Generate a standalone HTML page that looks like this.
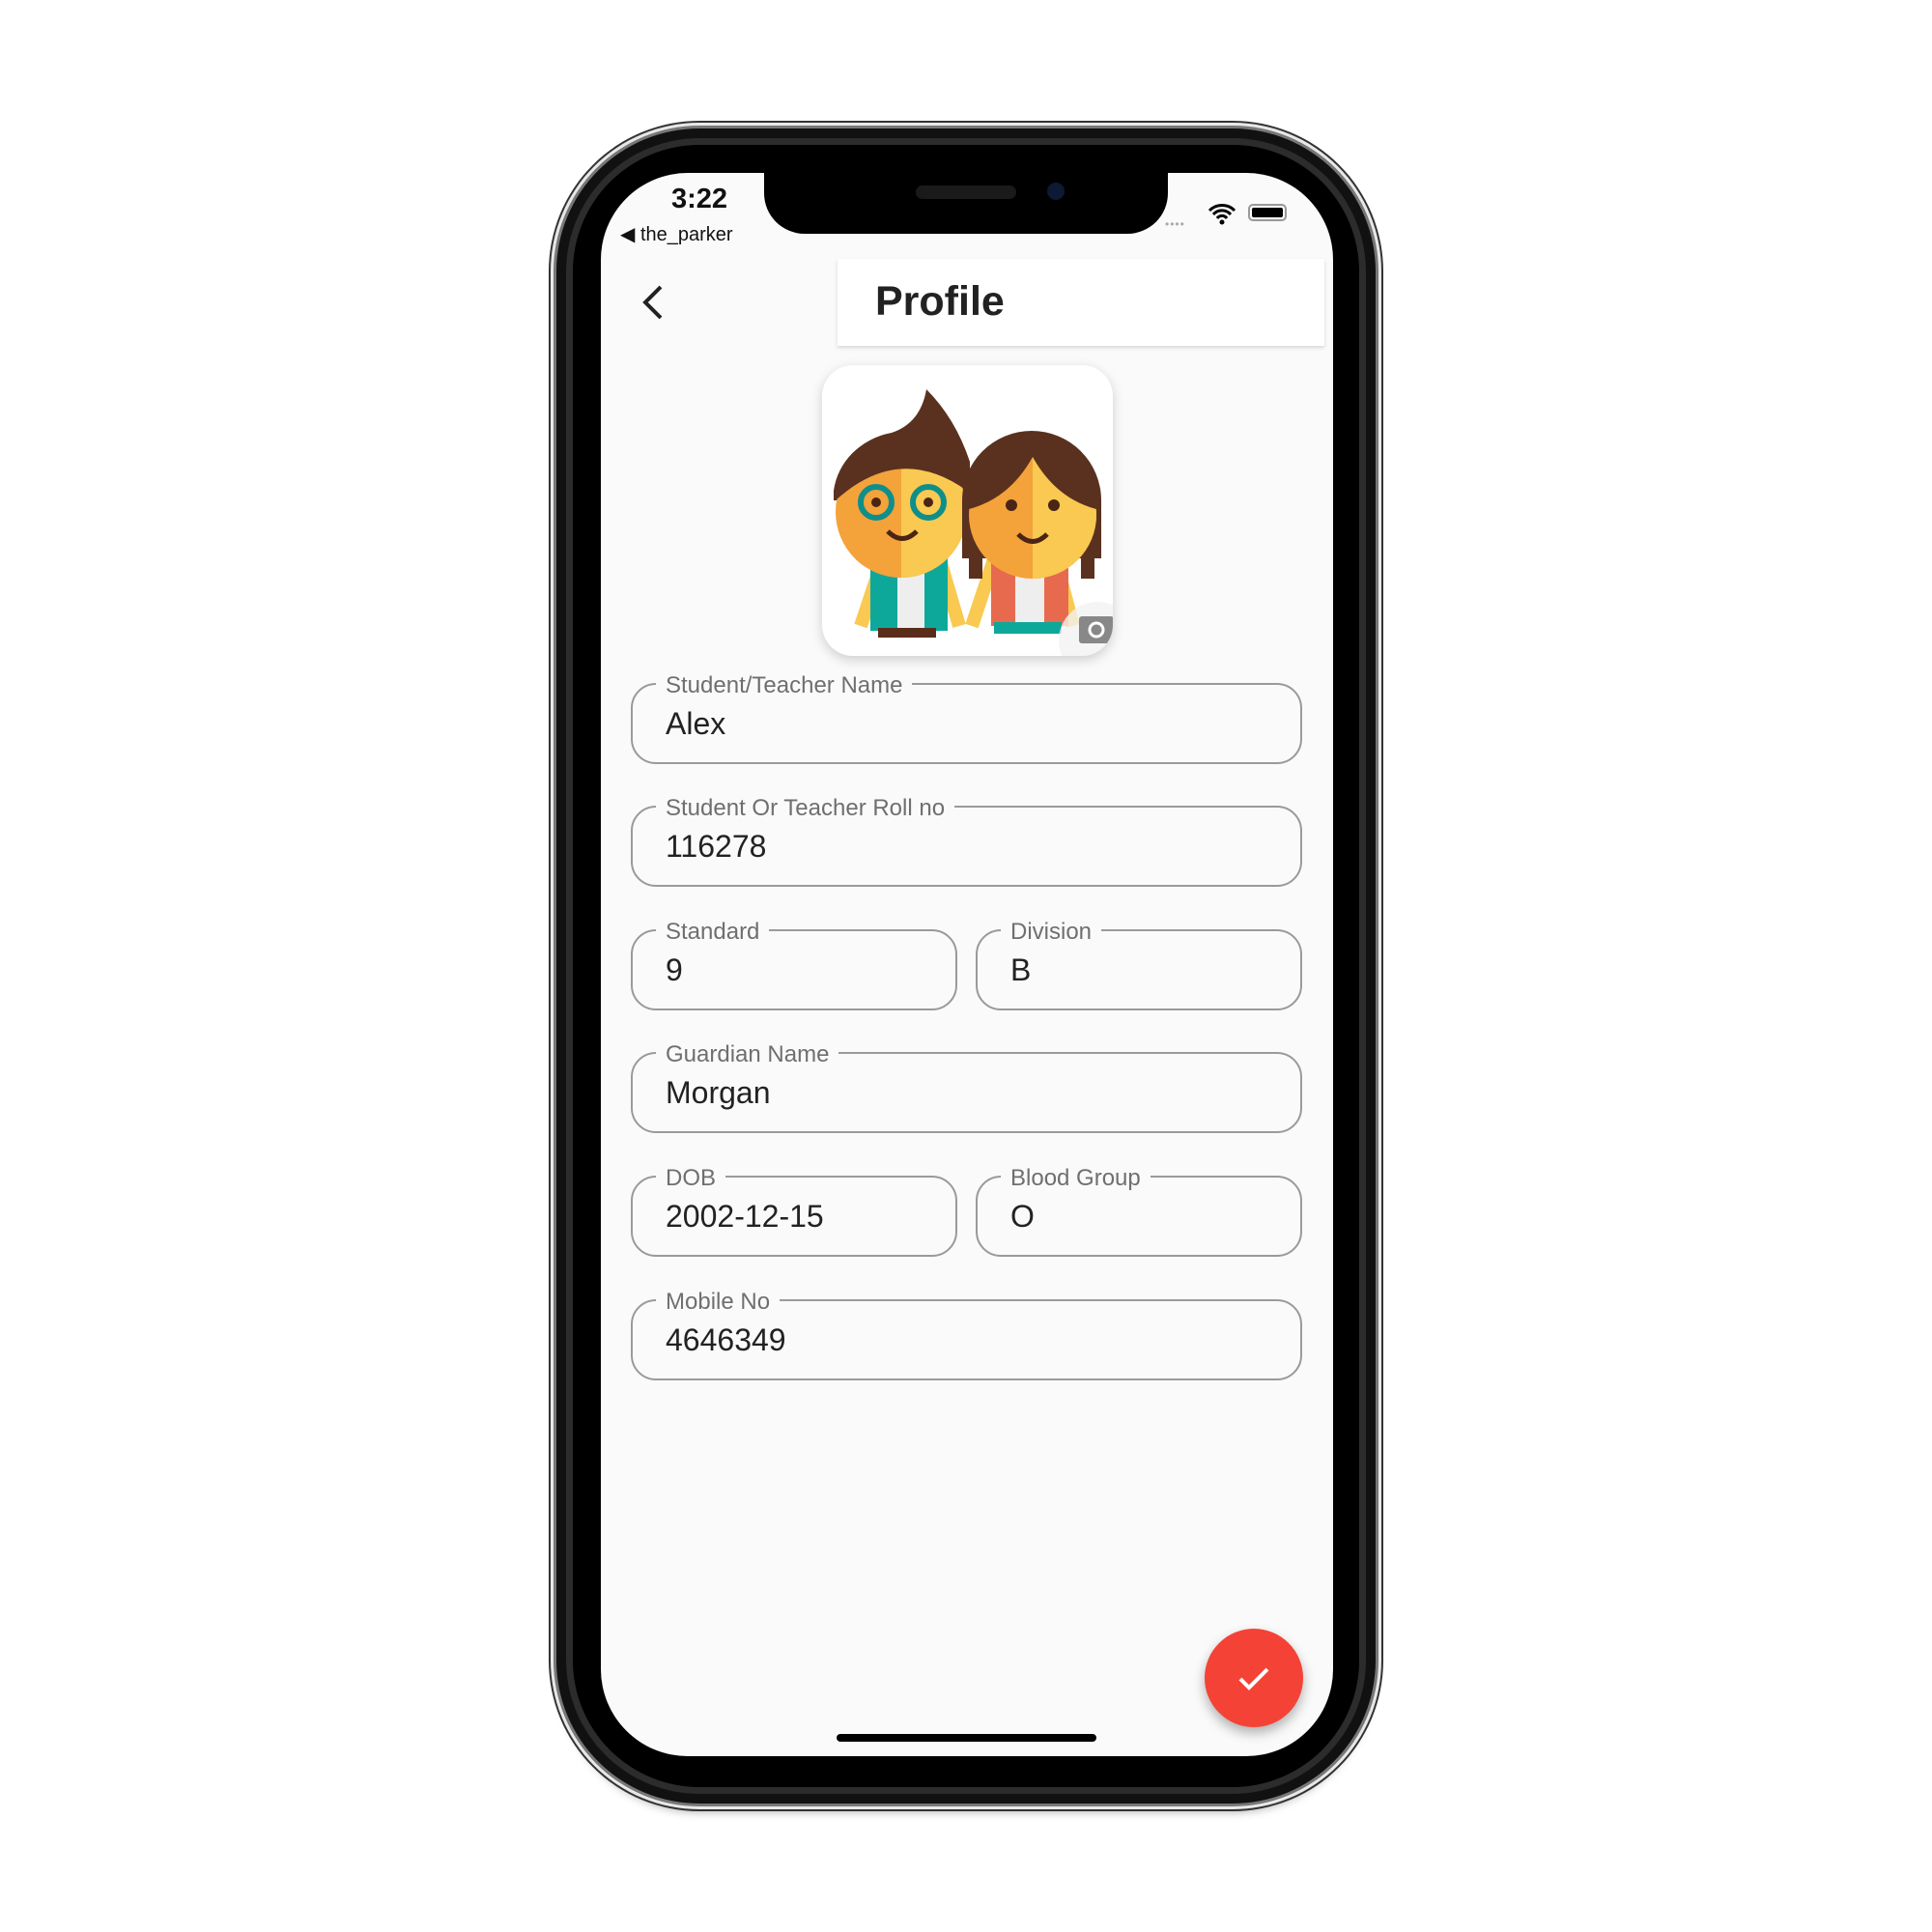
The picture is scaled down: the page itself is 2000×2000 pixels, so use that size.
<!DOCTYPE html>
<html><head><style>
body{margin:0;width:2000px;height:2000px;background:#fff;position:relative;overflow:hidden;font-family:"Liberation Sans",sans-serif}
.abs{position:absolute}
.phone{left:576px;top:133px;width:848px;height:1734px;border-radius:148px;background:#111;box-shadow:0 0 0 3px #777,0 0 0 6px #e8e8e8,0 0 0 8px #333,0 12px 10px -4px rgba(0,0,0,.35)}
.bezel{left:586px;top:143px;width:828px;height:1714px;border-radius:138px;background:#000;box-shadow:inset 0 0 0 7px #2c2c2c}
.screen{left:622px;top:179px;width:758px;height:1639px;border-radius:90px;background:#fafafa;overflow:hidden}
.notch{left:791px;top:179px;width:418px;height:63px;background:#000;border-radius:0 0 42px 42px}
.field{position:absolute;border:2px solid #9a9a9a;border-radius:26px;height:84px;box-sizing:border-box}
.lab{position:absolute;left:24px;top:-13px;background:#fafafa;padding:0 10px;font-size:24px;color:#6f6f6f;line-height:28px}
.val{position:absolute;left:34px;top:22px;font-size:32px;color:#222}
</style></head><body>
<div class="abs phone"></div>
<div class="abs bezel"></div>
<div class="abs screen"></div>
<div class="abs notch"></div>
<div class="abs" style="left:948px;top:192px;width:104px;height:14px;border-radius:7px;background:#1a1a1a"></div>
<div class="abs" style="left:1084px;top:189px;width:18px;height:18px;border-radius:9px;background:#0d1a33"></div>
<div class="abs" style="left:695px;top:190px;font-size:29px;font-weight:bold;color:#111">3:22</div>
<div class="abs" style="left:642px;top:230px;font-size:20px;color:#111">◀ the_parker</div>
<div class="abs" style="left:1206px;top:225px;font-size:12px;color:#aaa;letter-spacing:1px">••••</div>
<svg class="abs" style="left:1250px;top:210px" width="30" height="24" viewBox="0 0 30 24"><path d="M2 8a18 18 0 0 1 26 0M6 12a12 12 0 0 1 18 0M10 16a6 6 0 0 1 10 0" stroke="#000" stroke-width="3" fill="none"/><circle cx="15" cy="20" r="2.5"/></svg>
<div class="abs" style="left:1292px;top:211px;width:40px;height:18px;border:2px solid #999;border-radius:5px;padding:2px;box-sizing:border-box"><div style="background:#000;width:100%;height:100%;border-radius:2px"></div></div>
<svg class="abs" style="left:660px;top:294px" width="30" height="38" viewBox="0 0 30 38"><path d="M24 3L8 19l16 16" stroke="#222" stroke-width="4" fill="none"/></svg>
<div class="abs" style="left:867px;top:268px;width:504px;height:90px;background:#fff;box-shadow:0 2px 4px rgba(0,0,0,.15)"></div>
<div class="abs" style="left:906px;top:288px;font-size:43px;font-weight:bold;color:#222">Profile</div>
<div class="abs" style="left:851px;top:378px;width:301px;height:301px;border-radius:32px;background:#fff;box-shadow:0 4px 12px rgba(0,0,0,.18);overflow:hidden">
<svg width="301" height="301" viewBox="0 0 301 301">
<path d="M40 270l25-75M120 195l22 75M155 270l25-75M240 195l20 75" stroke="#f9c952" stroke-width="14"/>
<rect x="50" y="195" width="80" height="80" fill="#0ea89b"/><rect x="78" y="195" width="28" height="80" fill="#eee"/><rect x="58" y="272" width="60" height="10" fill="#5a2d1a"/>
<rect x="175" y="195" width="80" height="75" fill="#e76a4f"/><rect x="200" y="195" width="30" height="75" fill="#eee"/><rect x="178" y="266" width="70" height="12" fill="#0ea89b"/>
<path d="M12 130a75 70 0 0 1 60-60q30-10 36-45q30 30 45 75v40H12z" fill="#5a311f"/>
<circle cx="82" cy="152" r="68" fill="#f4a23a"/><path d="M82 84a68 68 0 0 1 0 136z" fill="#f9c952"/>
<path d="M14 140a68 60 0 0 1 136-10q-70-50-136 10" fill="#5a311f"/>
<circle cx="56" cy="142" r="16" fill="none" stroke="#0e8f8a" stroke-width="6"/><circle cx="110" cy="142" r="16" fill="none" stroke="#0e8f8a" stroke-width="6"/><circle cx="56" cy="142" r="5" fill="#4a2515"/><circle cx="110" cy="142" r="5" fill="#4a2515"/>
<path d="M68 172q15 15 30 0" stroke="#4a2515" stroke-width="5" fill="none"/>
<path d="M145 140a72 72 0 0 1 144 0v60h-144z" fill="#5a311f"/>
<rect x="152" y="195" width="14" height="26" fill="#5a311f"/><rect x="268" y="195" width="14" height="26" fill="#5a311f"/>
<circle cx="218" cy="155" r="66" fill="#f4a23a"/><path d="M218 89a66 66 0 0 1 0 132z" fill="#f9c952"/>
<path d="M148 150a70 70 0 0 1 140 0q-45-10-70-55q-25 45-70 55" fill="#5a311f"/>
<circle cx="196" cy="145" r="6" fill="#4a2515"/><circle cx="240" cy="145" r="6" fill="#4a2515"/>
<path d="M203 175q15 15 30 0" stroke="#4a2515" stroke-width="5" fill="none"/>
<circle cx="285" cy="285" r="40" fill="#f2f2f2" opacity=".8"/><rect x="266" y="260" width="36" height="28" rx="3" fill="#888"/><circle cx="284" cy="274" r="7" fill="none" stroke="#fff" stroke-width="3"/>
</svg></div>
<div class="field" style="left:653px;top:707px;width:695px"><div class="lab">Student/Teacher Name</div><div class="val">Alex</div></div>
<div class="field" style="left:653px;top:834px;width:695px"><div class="lab">Student Or Teacher Roll no</div><div class="val">116278</div></div>
<div class="field" style="left:653px;top:962px;width:338px"><div class="lab">Standard</div><div class="val">9</div></div>
<div class="field" style="left:1010px;top:962px;width:338px"><div class="lab">Division</div><div class="val">B</div></div>
<div class="field" style="left:653px;top:1089px;width:695px"><div class="lab">Guardian Name</div><div class="val">Morgan</div></div>
<div class="field" style="left:653px;top:1217px;width:338px"><div class="lab">DOB</div><div class="val">2002-12-15</div></div>
<div class="field" style="left:1010px;top:1217px;width:338px"><div class="lab">Blood Group</div><div class="val">O</div></div>
<div class="field" style="left:653px;top:1345px;width:695px"><div class="lab">Mobile No</div><div class="val">4646349</div></div>
<div class="abs" style="left:1247px;top:1686px;width:102px;height:102px;border-radius:51px;background:#f44336;box-shadow:0 6px 12px rgba(0,0,0,.3)"></div>
<svg class="abs" style="left:1278px;top:1717px" width="40" height="40" viewBox="0 0 40 40"><path d="M6 21l9 9 19-19" stroke="#fff" stroke-width="4" fill="none"/></svg>
<div class="abs" style="left:866px;top:1795px;width:269px;height:8px;border-radius:4px;background:#000"></div>
</body></html>
